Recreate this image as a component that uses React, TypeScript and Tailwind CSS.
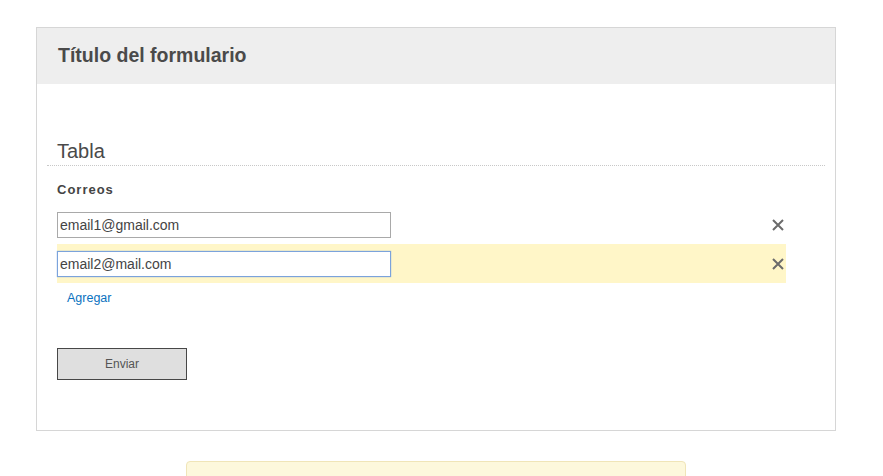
import React from 'react';

const emails = [
  { value: 'email1@gmail.com', focused: false },
  { value: 'email2@mail.com', focused: true },
];

const CloseIcon = () => (
  <svg width="12" height="12" viewBox="0 0 12 12" className="text-[#6b6b6b]">
    <path d="M1 1 L11 11 M11 1 L1 11" stroke="currentColor" strokeWidth="2" />
  </svg>
);

export default function App() {
  return (
    <div className="min-h-screen bg-white pt-[27px] font-['Liberation_Sans',Arial,sans-serif] text-[#444]">
      {/* Form card */}
      <div className="ml-[36px] w-[800px] border border-[#d6d6d6]">
        <div className="h-[56px] bg-[#eeeeee] pl-[21px] flex items-center">
          <h1 className="text-[19.5px] font-bold text-[#4a4a4a]">Título del formulario</h1>
        </div>

        <div className="px-[10px] pt-[55px] pb-[50px]">
          <div className="border-b border-dotted border-[#c8c8c8] pl-[10px] pb-[2px]">
            <h2 className="text-[20px] leading-[24px] text-[#4a4a4a]">Tabla</h2>
          </div>

          <div className="pl-[10px]">
            <div className="mt-[16px] text-[13px] leading-[16px] font-bold tracking-[1px] text-[#444]">Correos</div>

            <div className="mt-[7px] w-[729px]">
              {emails.map((e, i) => (
                <div
                  key={i}
                  className={`h-[39px] flex items-center justify-between pr-[2px] ${e.focused ? 'bg-[#fff6c8]' : ''}`}
                >
                  <input
                    defaultValue={e.value}
                    className={`w-[334px] h-[26px] px-[2px] text-[14px] text-[#444] bg-white outline-none border ${
                      e.focused ? 'border-[#7ba3dc] shadow-[0_0_1px_#7ba3dc]' : 'border-[#a9a9a9]'
                    }`}
                  />
                  <CloseIcon />
                </div>
              ))}
            </div>

            <div className="mt-[7px] pl-[10px] text-[12.5px] leading-[16px] text-[#0a72c0]">Agregar</div>

            <button className="mt-[42px] w-[130px] h-[32px] bg-[#dfdfdf] border border-[#474747] text-[12px] text-[#555]">
              Enviar
            </button>
          </div>
        </div>
      </div>

      {/* Notice */}
      <div className="ml-[186px] mt-[30px] w-[500px] rounded-[4px] border border-[#f0e5b8] bg-[#fdf8dc] pl-[32px] pr-[20px] pt-[11px] pb-[12px] text-[13px] text-[#8a6d3b]">
        Los detalles de la ejecución se guardarán en el registro durante 155 días.
      </div>
    </div>
  );
}
